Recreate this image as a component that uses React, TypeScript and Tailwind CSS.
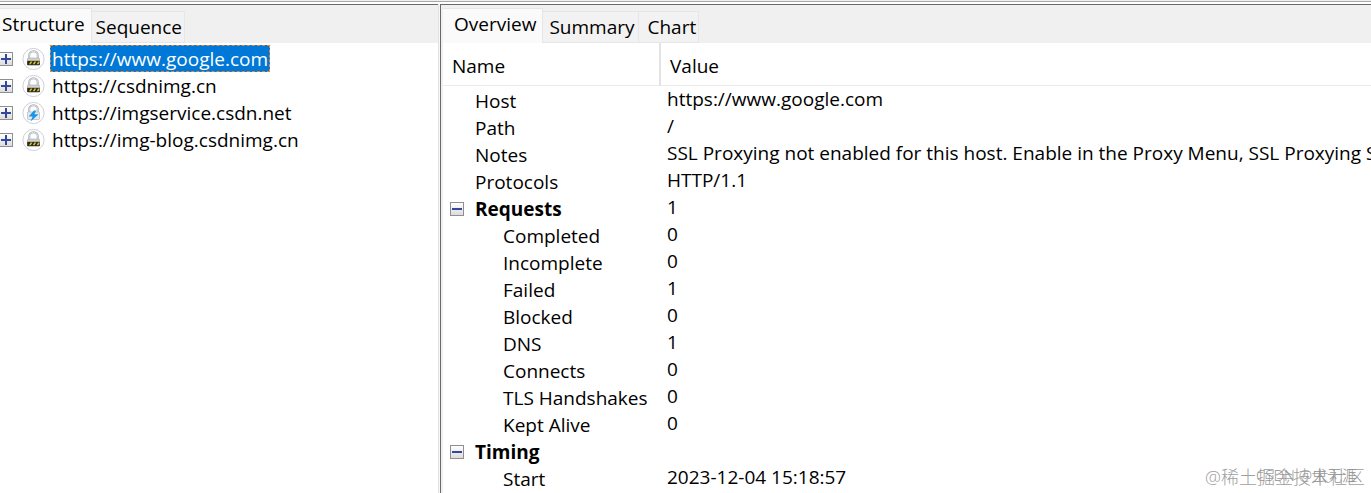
import React, { useState } from "react";

type Host = { url: string; kind: "lock" | "bolt" };
type Row = { name: string; value: string; level: 0 | 1 | 2 };

const hosts: Host[] = [
  { url: "https://www.google.com", kind: "lock" },
  { url: "https://csdnimg.cn", kind: "lock" },
  { url: "https://imgservice.csdn.net", kind: "bolt" },
  { url: "https://img-blog.csdnimg.cn", kind: "lock" },
];

const rows: Row[] = [
  { name: "Host", value: "https://www.google.com", level: 1 },
  { name: "Path", value: "/", level: 1 },
  {
    name: "Notes",
    value: "SSL Proxying not enabled for this host. Enable in the Proxy Menu, SSL Proxying Settings",
    level: 1,
  },
  { name: "Protocols", value: "HTTP/1.1", level: 1 },
  { name: "Requests", value: "1", level: 0 },
  { name: "Completed", value: "0", level: 2 },
  { name: "Incomplete", value: "0", level: 2 },
  { name: "Failed", value: "1", level: 2 },
  { name: "Blocked", value: "0", level: 2 },
  { name: "DNS", value: "1", level: 2 },
  { name: "Connects", value: "0", level: 2 },
  { name: "TLS Handshakes", value: "0", level: 2 },
  { name: "Kept Alive", value: "0", level: 2 },
  { name: "Timing", value: "", level: 0 },
  { name: "Start", value: "2023-12-04 15:18:57", level: 2 },
];

function Toggle({ open, label }: { open: boolean; label: string }) {
  return (
    <button
      type="button"
      aria-label={label}
      className="flex size-3.5 shrink-0 items-center justify-center border border-[#8e8f8f] bg-gradient-to-b from-white to-[#dcdcdc]"
    >
      <svg viewBox="0 0 10 10" className="size-2.5" stroke="#35479b" strokeWidth="2">
        <path d={open ? "M0 5H10" : "M0 5H10M5 0V10"} />
      </svg>
    </button>
  );
}

function HostIcon({ kind }: { kind: Host["kind"] }) {
  return (
    <svg viewBox="0 0 24 24" className="size-6 shrink-0" fill="none" aria-hidden="true">
      <circle cx="11.5" cy="12" r="10.6" fill="#fefefe" stroke="#c9cbd6" strokeWidth="0.9" />
      <path d="M7.2 12V8.6a4.3 4.3 0 0 1 8.6 0V12" stroke="#a3a8ac" strokeWidth="2" />
      <path d="M7.2 12V8.6a4.3 4.3 0 0 1 8.6 0V12" stroke="#eceff0" strokeWidth="0.8" />
      <rect
        x="5.5"
        y="11"
        width="12"
        height="7.5"
        rx="0.8"
        fill={kind === "lock" ? "#cfd2cf" : "#e6eaed"}
        stroke="#a9adaf"
        strokeWidth="0.6"
      />
      {kind === "lock" ? (
        <>
          <path d="M5.2 13.8h12.6v4.2H5.2z" fill="#2b2a1c" />
          <path d="M7 17.2l1.6-2.6h1.8l-1.6 2.6zM10.8 17.2l1.6-2.6h1.8l-1.6 2.6zM14.6 17.2l1.6-2.6h1.2v1l-1 1.6z" fill="#d9c32c" />
        </>
      ) : (
        <path d="M12 9.5L6.6 15.4h4L8.6 20.5l8-7.2h-4.2l1.8-3.8z" fill="#1794ee" />
      )}
    </svg>
  );
}

function Tab({
  children,
  selected,
  onClick,
  className,
}: {
  children: React.ReactNode;
  selected: boolean;
  onClick: () => void;
  className: string;
}) {
  return (
    <button
      type="button"
      role="tab"
      aria-selected={selected}
      onClick={onClick}
      className={
        (selected
          ? "h-[35px] border-r border-t border-[#e6e6e6] bg-[#fafafa] pb-[3px] "
          : "h-8 border-b border-r border-t border-[#e6e6e6] bg-[#f2f2f2] ") +
        "whitespace-nowrap " +
        className
      }
    >
      {children}
    </button>
  );
}

export default function App() {
  const [leftTab, setLeftTab] = useState("Structure");
  const [rightTab, setRightTab] = useState("Overview");
  const [active, setActive] = useState(hosts[0].url);

  return (
    <div className="relative flex h-screen flex-col overflow-hidden bg-[#f0f0f0] font-['Open_Sans','Noto_Sans_CJK_SC',sans-serif] text-[19px] leading-[27px] text-black">
      <div className="h-1 shrink-0 border-b-2 border-white bg-[#f0f0f0]">
        <div className="mt-px h-px bg-[#a8a8a8]" />
      </div>
      <div className="flex min-h-0 flex-1">
        <section className="flex w-[438px] shrink-0 flex-col border-t border-[#696969]">
          <div role="tablist" className="flex h-[38px] items-end">
            <Tab selected={leftTab === "Structure"} onClick={() => setLeftTab("Structure")} className="pl-0.5 pr-1.5">
              Structure
            </Tab>
            <Tab selected={leftTab === "Sequence"} onClick={() => setLeftTab("Sequence")} className="px-0.5 pl-1">
              Sequence
            </Tab>
          </div>
          <ul className="flex-1 bg-white pt-0.5">
            {hosts.map((h) => (
              <li key={h.url} className="flex h-[27px] items-center">
                <div className="flex w-[22px] shrink-0">
                  <div className="-ml-px flex">
                    <Toggle open={false} label={"Expand " + h.url} />
                  </div>
                </div>
                <HostIcon kind={h.kind} />
                <button
                  type="button"
                  onClick={() => setActive(h.url)}
                  className={
                    h.url === active
                      ? "ml-1 h-[27px] border border-dashed border-[#e08a3c] bg-[#0078d7] px-px pt-0.5 leading-[23px] text-white"
                      : "ml-1 h-[27px] border border-transparent px-px pt-0.5 leading-[23px]"
                  }
                >
                  {h.url}
                </button>
              </li>
            ))}
          </ul>
        </section>
        <div className="w-0.5 shrink-0 border-l border-[#e3e3e3] bg-[#f7f7f7]" />
        <section className="flex min-w-0 flex-1 flex-col border-l border-t border-[#696969]">
          <div role="tablist" className="flex h-[38px] items-end pl-0.5">
            <Tab selected={rightTab === "Overview"} onClick={() => setRightTab("Overview")} className="pl-[11px] pr-1.5">
              Overview
            </Tab>
            <Tab selected={rightTab === "Summary"} onClick={() => setRightTab("Summary")} className="pl-1.5 pr-1">
              Summary
            </Tab>
            <Tab selected={rightTab === "Chart"} onClick={() => setRightTab("Chart")} className="pl-2 pr-0.5">
              Chart
            </Tab>
          </div>
          <div className="min-h-0 flex-1 overflow-hidden border-l-2 border-[#f0f0f0] bg-white">
            <table className="w-full table-fixed border-collapse text-left">
              <colgroup>
                <col className="w-[217px]" />
                <col />
              </colgroup>
              <thead>
                <tr className="h-[42px] border-b border-[#ececec]">
                  <th className="border-r-2 border-[#e3e3e3] p-0 pl-[9px] pt-1.5 font-normal">Name</th>
                  <th className="p-0 pl-[9px] pt-1.5 font-normal">Value</th>
                </tr>
              </thead>
              <tbody>
                {rows.map((r) => (
                  <tr key={r.name} className="h-[27px]">
                    <td className="whitespace-nowrap p-0 pt-1 leading-[23px]">
                      {r.level === 0 ? (
                        <div className="flex items-center gap-[11px] pl-[7px] font-bold">
                          <Toggle open label={"Collapse " + r.name} />
                          {r.name}
                        </div>
                      ) : (
                        <div className={r.level === 1 ? "pl-8" : "pl-[60px]"}>{r.name}</div>
                      )}
                    </td>
                    <td className="overflow-hidden whitespace-nowrap p-0 pl-[7px]">{r.value}</td>
                  </tr>
                ))}
              </tbody>
            </table>
          </div>
        </section>
      </div>
      <div className="pointer-events-none absolute bottom-0.5 right-1.5 text-[18px] font-light text-[#a0a0a0]">
        @稀土掘金技术社区
      </div>
      <div className="pointer-events-none absolute bottom-1 right-3.5 text-[15px] font-light text-[#909090]">
        CSDN @虫无涯
      </div>
    </div>
  );
}
